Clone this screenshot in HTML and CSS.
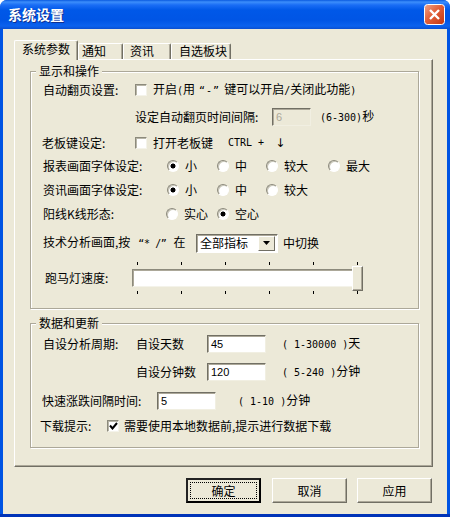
FILE: index.html
```html
<!DOCTYPE html>
<html lang="zh">
<head>
<meta charset="utf-8">
<title>系统设置</title>
<link rel="stylesheet" href="styles.css">
</head>
<body>
<div class="window">
  <div class="titlebar">
    <span class="title">系统设置</span>
    <span class="close">
      <svg width="21" height="21" viewBox="0 0 21 21">
        <defs><linearGradient id="cg" x1="0" y1="0" x2="1" y2="1"><stop offset="0" stop-color="#f0a58c"/><stop offset="0.45" stop-color="#e2603a"/><stop offset="1" stop-color="#c2350f"/></linearGradient></defs>
        <rect x="0.5" y="0.5" width="20" height="20" rx="3" fill="url(#cg)" stroke="#fff"/>
        <path d="M6 6 L15 15 M15 6 L6 15" stroke="#fff" stroke-width="2.4" fill="none"/>
      </svg>
    </span>
  </div>
  <div class="client">
    <div class="tabs">
      <div class="tab tab-active t1">系统参数</div>
      <div class="tab t2">通知</div>
      <div class="tab t3">资讯</div>
      <div class="tab t4">自选板块</div>
    </div>
    <div class="panel">
      <section class="group g1">
        <span class="legend">显示和操作</span>
        <div class="row r1">
          <span class="c92">自动翻页设置:</span>
          <span class="check"></span><span class="txt">开启<span class="mono">(</span>用<span class="mono q1">“-”</span>键可以开启<span class="mono">/</span>关闭此功能<span class="mono">)</span></span>
        </div>
        <div class="row r2">
          <span class="ind92"></span>
          <span class="c137">设定自动翻页时间间隔:</span>
          <span class="input in39 disabled"><span class="val">6</span></span>
          <span class="txt range1"><span class="mono">(6-300)</span>秒</span>
        </div>
        <div class="row r3">
          <span class="c93 tight">老板键设定:</span>
          <span class="check"></span><span class="txt c75">打开老板键</span>
          <span class="mono">CTRL + </span><span class="arrow">↓</span>
        </div>
        <div class="row r4">
          <span class="c124">报表画面字体设定:</span>
          <span class="radio on"></span><span class="opt o38">小</span>
          <span class="radio"></span><span class="opt o37">中</span>
          <span class="radio"></span><span class="opt o50">较大</span>
          <span class="radio"></span><span class="opt">最大</span>
        </div>
        <div class="row r5">
          <span class="c124">资讯画面字体设定:</span>
          <span class="radio on"></span><span class="opt o38">小</span>
          <span class="radio"></span><span class="opt o37">中</span>
          <span class="radio"></span><span class="opt">较大</span>
        </div>
        <div class="row r6">
          <span class="c123">阳线K线形态:</span>
          <span class="radio"></span><span class="opt o39">实心</span>
          <span class="radio on"></span><span class="opt">空心</span>
        </div>
        <div class="row r7">
          <span class="c153">技术分析画面,按<span class="mono q2">“* /”</span>在</span>
          <span class="select"><span class="sel-text">全部指标</span><span class="sel-btn"><svg width="7" height="4" viewBox="0 0 7 4"><path d="M0 0H7L3.5 4Z" fill="#000"/></svg></span></span>
          <span class="txt sw">中切换</span>
        </div>
        <div class="row r8">
          <span class="c90">跑马灯速度:</span>
          <div class="slider">
            <div class="ticks"><i></i><i></i><i></i><i></i><i></i><i></i></div>
            <div class="track"><span class="thumb"></span></div>
            <div class="ticks"><i></i><i></i><i></i><i></i><i></i><i></i></div>
          </div>
        </div>
      </section>
      <section class="group g2">
        <span class="legend">数据和更新</span>
        <div class="row d1">
          <span class="c93">自设分析周期:</span>
          <span class="c71">自设天数</span>
          <span class="input in59"><span class="val">45</span></span>
          <span class="txt rng"><span class="mono">( 1-30000 )</span>天</span>
        </div>
        <div class="row d2">
          <span class="ind93"></span>
          <span class="c71">自设分钟数</span>
          <span class="input in59"><span class="val">120</span></span>
          <span class="txt rng"><span class="mono">( 5-240 )</span>分钟</span>
        </div>
        <div class="row d3">
          <span class="c115 tight">快速涨跌间隔时间:</span>
          <span class="input in59"><span class="val">5</span></span>
          <span class="txt rng2"><span class="mono">( 1-10 )</span>分钟</span>
        </div>
        <div class="row d4">
          <span class="c67 tighter">下载提示:</span>
          <span class="check checked"><svg width="9" height="8" viewBox="0 0 9 8"><path d="M1 3.5 L3.5 6.5 L8 1" stroke="#000" stroke-width="2" fill="none"/></svg></span><span class="txt">需要使用本地数据前,提示进行数据下载</span>
        </div>
      </section>
    </div>
    <div class="buttons">
      <button class="btn default"><span class="focus">确定</span></button>
      <button class="btn b-cancel">取消</button>
      <button class="btn b-apply">应用</button>
    </div>
  </div>
</div>
</body>
</html>
```

FILE: styles.css
```css
* { box-sizing: border-box; }
html, body { margin: 0; padding: 0; }
body {
  width: 450px; height: 517px; overflow: hidden; background: #fff;
  font: 12px/14px "Noto Sans CJK SC", "Liberation Sans", sans-serif;
  color: #000;
}
.window {
  width: 450px; height: 517px; display: flex; flex-direction: column;
  background: linear-gradient(180deg, #0054e3 0, #0054e3 514px, #0033b8 514px);
  border-radius: 7px 7px 0 0; overflow: hidden;
}
.titlebar {
  height: 29px; flex: none; display: flex; align-items: center; justify-content: space-between;
  padding: 0 5px 1px 8px;
  background: linear-gradient(180deg, #0a5ae0 0, #3c8efb 2px, #1a6df5 5px, #0058e8 10px, #0055e5 20px, #0b62ee 26px, #0a4fd0 29px);
}
.title { color: #fff; font-weight: 700; font-size: 14px; text-shadow: 1px 1px #0f2f8f; }
.close { display: block; width: 21px; height: 21px; }
.close svg { display: block; }
.client {
  flex: 1; margin: 0 3px 3px; background: #ece9d8;
  padding: 11px 14px 0 11px; display: flex; flex-direction: column;
}
.tabs { display: flex; height: 19px; align-items: flex-end; position: relative; z-index: 1; }
.tab {
  height: 16px; background: #ece9d8; padding: 0 0 0 8px;
  border-top: 1px solid #fff; border-left: 1px solid #fff;
  border-right: 1px solid #716f64; box-shadow: inset -1px 0 #aca899;
  border-radius: 2px 2px 0 0;
}
.tab-active { height: 20px; padding-top: 1px; padding-left: 7px; margin-bottom: -1px; }
.t1 { width: 64px; }
.t2 { width: 45px; padding-left: 3px; }
.t3 { width: 48px; padding-left: 6px; }
.t4 { width: 60px; padding-left: 7px; }
.panel {
  width: 419px; height: 408px; padding: 11px 14px 0 15px;
  border: 1px solid; border-color: #fff #716f64 #716f64 #fff;
  box-shadow: inset -1px -1px #aca899;
}
.group {
  width: 389px; border: 1px solid #aca899;
  box-shadow: inset 1px 1px #fff, 1px 1px #fff; display: block;
}
.g1 { height: 238px; }
.g2 { height: 125px; margin-top: 14px; }
.legend {
  display: block; width: max-content; margin: -8px 0 0 5px; padding: 0 3px;
  background: #ece9d8; height: 14px;
}
.row { display: flex; align-items: center; height: 20px; padding-left: 12px; white-space: nowrap; }
.r1 { margin-top: 2px; }
.r2 { margin-top: 7px; }
.r3 { margin-top: 6px; }
.r4 { margin-top: 3px; }
.r5, .r6 { margin-top: 4px; }
.r7 { margin-top: 9px; }
.r8 { margin-top: 9px; height: 32px; }
.d1 { margin-top: 4px; }
.d2 { margin-top: 8px; }
.d3 { margin-top: 9px; }
.d4 { margin-top: 5px; }
.c92 { width: 92px; }
.c93 { width: 93px; }
.ind92 { width: 92px; flex: none; }
.ind93 { width: 93px; flex: none; }
.c137 { width: 137px; }
.c75 { width: 75px; }
.c124 { width: 124px; }
.c123 { width: 123px; }
.c153 { width: 153px; }
.c90 { width: 89px; padding-left: 2px; }
.c71 { width: 71px; }
.c115 { width: 115px; }
.c67 { width: 67px; }
.tight { margin-left: -1px; }
.tighter { margin-left: -3px; }
.check {
  flex: none; width: 12px; height: 12px; margin-right: 6px; background: #fff;
  border: 1px solid; border-color: #8c8a7c #f4f3ea #f4f3ea #8c8a7c;
  box-shadow: inset 1px 1px #b8b6a8;
}
.checked { display: flex; align-items: center; justify-content: center; margin-right: 5px; }
.checked svg { display: block; }
.radio {
  flex: none; width: 12px; height: 12px; border-radius: 50%; margin-right: 6px;
  background: #fff; border: 1px solid; border-color: #8c8a7c #fff #fff #8c8a7c;
  box-shadow: inset 1px 1px #c8c6b8;
  display: block;
}
.radio.on { background: radial-gradient(circle at 50% 50%, #000 0, #000 2.2px, #fff 2.8px); }
.o38 { width: 32px; }
.o37 { width: 31px; }
.o39 { width: 33px; }
.o50 { width: 44px; }
.opt { flex: none; }
.txt { flex: none; }
.mono { font: 10px/14px "DejaVu Sans Mono", "Liberation Mono", monospace; white-space: pre; }
.q1 { margin: 0 4px; letter-spacing: 1px; }
.q2 { margin: 0 7px 0 8px; letter-spacing: -0.4px; }
.arrow { font: 12px/14px "DejaVu Sans", sans-serif; margin-left: 5px; }
.input {
  flex: none; height: 18px; background: #fff; display: flex; align-items: center; padding-left: 3px;
  border: 1px solid; border-color: #716f64 #f1efe2 #f1efe2 #716f64;
  box-shadow: inset 1px 1px #aca899;
}
.val { font: 11px/14px "Liberation Sans", sans-serif; }
.in39 { width: 39px; }
.in59 { width: 59px; }
.disabled { background: #ece9d8; color: #aca899; }
.range1 { margin-left: 9px; }
.rng { margin-left: 16px; }
.rng2 { margin-left: 22px; }
.select {
  flex: none; width: 82px; height: 19px; background: #fff; display: flex; padding: 2px;
  border: 1px solid; border-color: #716f64 #fff #fff #716f64;
  box-shadow: inset 1px 1px #aca899;
  align-items: center; justify-content: space-between;
}
.sel-text { padding-left: 1px; }
.sel-btn {
  flex: none; width: 17px; height: 15px; background: #ece9d8; display: flex; align-items: center; justify-content: center;
  border: 1px solid; border-color: #fff #716f64 #716f64 #fff;
}
.sel-btn svg { display: block; }
.sw { margin-left: 5px; }
.slider { flex: none; width: 231px; display: flex; flex-direction: column; gap: 4px; }
.ticks { height: 3px; display: flex; justify-content: space-between; padding: 0 5px; }
.ticks i { display: block; width: 1px; height: 3px; background: #000; }
.track {
  height: 18px; background: #fff; position: relative;
  border: 1px solid; border-color: #8c8a7c #f4f3ea #f4f3ea #8c8a7c;
  box-shadow: inset 1px 1px #aca899;
}
.thumb {
  position: absolute; right: -1px; top: -4px; width: 11px; height: 25px; background: #ece9d8;
  border: 1px solid; border-color: #fff #716f64 #716f64 #fff;
  box-shadow: inset -1px -1px #aca899;
}
.buttons { display: flex; padding: 11px 0 0 172px; }
.btn {
  flex: none; width: 75px; height: 25px; background: #ece9d8; padding: 0; font: inherit; color: #000;
  border: 1px solid; border-color: #fff #716f64 #716f64 #fff;
  box-shadow: inset -1px -1px #aca899; display: flex; align-items: center; justify-content: center;
}
.b-cancel { margin-left: 11px; }
.b-apply { margin-left: 10px; }
.default { border: 2px solid #000; border-color: #222 #000 #000 #222; box-shadow: none; padding: 2px; }
.focus {
  display: flex; width: 100%; height: 100%; align-items: center; justify-content: center;
  border: 1px dotted #000;
}
```
